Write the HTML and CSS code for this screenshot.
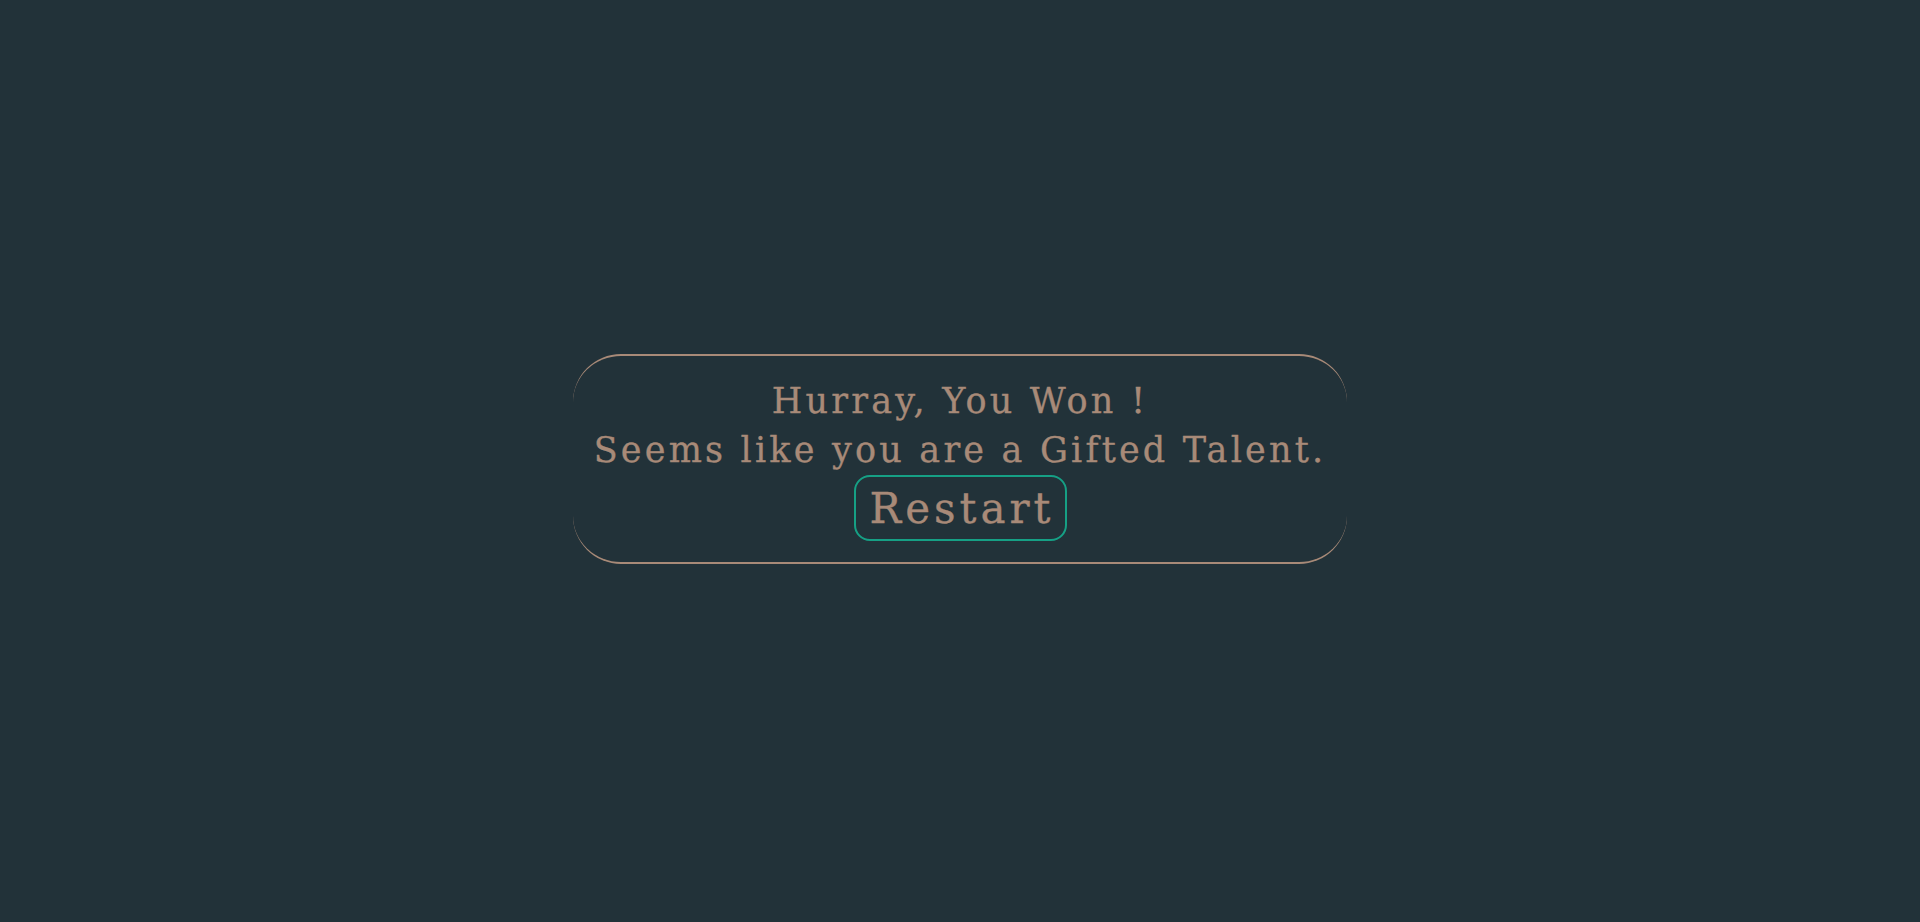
FILE: index.html
```html
<!DOCTYPE html>
<html lang="en">
<head>
<meta charset="utf-8">
<title>Hurray</title>
<link rel="stylesheet" href="styles.css">
</head>
<body>
<main class="stage">
  <section class="result">
    <p class="line">Hurray, You Won !</p>
    <p class="line">Seems like you are a Gifted Talent.</p>
    <button class="restart" type="button">Restart</button>
  </section>
</main>
</body>
</html>
```
FILE: styles.css
```css
html, body {
  margin: 0;
  height: 100%;
  background: #223239;
}
.stage {
  height: 100%;
  display: flex;
  align-items: center;
  justify-content: center;
}
.result {
  width: 774px;
  height: 210px;
  margin-bottom: 4px;
  box-sizing: border-box;
  border-top: 2px solid #a88a78;
  border-bottom: 2px solid #a88a78;
  border-left: 0;
  border-right: 0;
  border-radius: 48px;
  display: flex;
  flex-direction: column;
  align-items: center;
  justify-content: center;
  font-family: "DejaVu Serif", "Liberation Serif", serif;
  color: #a88a78;
  -webkit-text-stroke: 0.35px #a88a78;
}
.line {
  margin: 0;
  font-size: 35px;
  line-height: 49px;
  letter-spacing: 3.2px;
}
.restart {
  margin-top: 0;
  font-family: inherit;
  font-size: 42px;
  letter-spacing: 4px;
  color: #a88a78;
  background: transparent;
  border: 2px solid #16a085;
  border-radius: 16px;
  width: 213px;
  height: 66px;
  padding: 0 0 0 4px;
}
```
